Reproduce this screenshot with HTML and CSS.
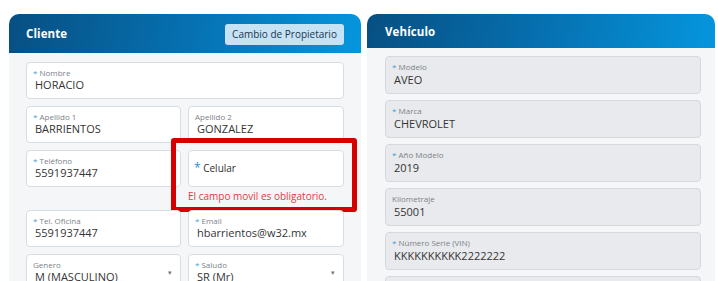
FILE: index.html
```html
<!DOCTYPE html>
<html lang="es">
<head>
<meta charset="utf-8">
<title>Cliente / Vehículo</title>
<link rel="stylesheet" href="styles.css">
</head>
<body>
<div class="page">
  <section class="card card-left">
    <header class="card-head head-left">
      <h2 class="card-title">Cliente</h2>
      <button class="btn-owner" type="button">Cambio de Propietario</button>
    </header>
    <div class="card-body">
      <div class="grid">
        <div class="field span2"><span class="lbl"><i class="req">*</i> Nombre</span><span class="val">HORACIO</span></div>
        <div class="field"><span class="lbl"><i class="req">*</i> Apellido 1</span><span class="val">BARRIENTOS</span></div>
        <div class="field"><span class="lbl">Apellido 2</span><span class="val">GONZALEZ</span></div>
        <div class="field"><span class="lbl"><i class="req">*</i> Teléfono</span><span class="val">5591937447</span></div>
        <div class="cell-err">
          <div class="field field-empty"><span class="ph"><i class="req req-big">*</i> Celular</span></div>
          <div class="err">El campo movil es obligatorio.</div>
          <div class="highlight"></div>
        </div>
        <div class="field"><span class="lbl"><i class="req">*</i> Tel. Oficina</span><span class="val">5591937447</span></div>
        <div class="field"><span class="lbl"><i class="req">*</i> Email</span><span class="val">hbarrientos@w32.mx</span></div>
        <div class="field select"><span class="lbl">Genero</span><span class="val">M (MASCULINO)</span><span class="caret">&#9662;</span></div>
        <div class="field select"><span class="lbl"><i class="req">*</i> Saludo</span><span class="val">SR (Mr)</span><span class="caret">&#9662;</span></div>
      </div>
    </div>
  </section>
  <section class="card card-right">
    <header class="card-head head-right">
      <h2 class="card-title">Vehículo</h2>
    </header>
    <div class="card-body body-right">
      <div class="stack">
        <div class="field dis"><span class="lbl"><i class="req">*</i> Modelo</span><span class="val">AVEO</span></div>
        <div class="field dis"><span class="lbl"><i class="req">*</i> Marca</span><span class="val">CHEVROLET</span></div>
        <div class="field dis"><span class="lbl"><i class="req">*</i> Año Modelo</span><span class="val">2019</span></div>
        <div class="field dis"><span class="lbl">Kilometraje</span><span class="val">55001</span></div>
        <div class="field dis"><span class="lbl"><i class="req">*</i> Número Serie (VIN)</span><span class="val">KKKKKKKKKK2222222</span></div>
        <div class="field dis"></div>
      </div>
    </div>
  </section>
</div>
</body>
</html>
```
FILE: styles.css
```css
* { box-sizing: border-box; }
html, body { margin: 0; padding: 0; background: #ffffff; overflow: hidden; }
body {
  font-family: "Open Sans", "Noto Sans", "Liberation Sans", sans-serif;
  color: #333;
}
.page {
  display: flex;
  align-items: flex-start;
  gap: 6px;
  padding: 14px 0 0 9px;
  height: 281px;
  overflow: hidden;
}
.card {
  background: #f5f6f8;
  border-radius: 10px 10px 0 0;
  display: flex;
  flex-direction: column;
  flex-shrink: 0;
  height: 300px;
}
.card-left { width: 352px; }
.card-right { width: 348px; }
.card-head {
  flex-shrink: 0;
  display: flex;
  align-items: center;
  justify-content: space-between;
  padding: 0 17px;
  border-radius: 10px 10px 0 0;
  background: linear-gradient(100deg, #074f82 0%, #0670b0 50%, #0596de 100%);
}
.head-left { height: 39px; }
.head-right { height: 34px; padding-left: 18px; }
.card-title {
  margin: 0;
  font-size: 11.5px;
  font-weight: 700;
  color: #ffffff;
  letter-spacing: 0.1px;
}
.btn-owner {
  font-family: inherit;
  font-size: 10px;
  color: #1c364f;
  background: #c6e3f5;
  border: 0;
  border-radius: 3px;
  height: 21px;
  padding: 0 5px;
  width: 119px;
  margin-top: 1px;
  white-space: nowrap;
}
.card-body { flex-shrink: 0; padding: 9px 17px 0; }
.body-right { padding: 8px 14px 0 18px; }
.grid {
  display: grid;
  grid-template-columns: 155px 156px;
  column-gap: 7px;
  row-gap: 7px;
}
.span2 { grid-column: 1 / 3; }
.field {
  position: relative;
  display: flex;
  flex-direction: column;
  flex-shrink: 0;
  height: 37px;
  background: #ffffff;
  border: 1px solid #d8dde4;
  border-radius: 4px;
  padding: 5px 8px 0 6px;
}
.lbl {
  font-size: 8px;
  line-height: 10px;
  color: #7d8288;
  white-space: nowrap;
}
.req {
  font-style: normal;
  color: #3a9fe0;
  font-size: 8px;
}
.val {
  font-size: 11px;
  line-height: 14px;
  color: #343434;
  padding-left: 2px;
  white-space: nowrap;
}
.select .caret {
  position: absolute;
  right: 8px;
  top: 13px;
  font-size: 7px;
  color: #777;
}
.cell-err { position: relative; display: flex; flex-direction: column; }
.field-empty { justify-content: center; padding: 0 8px 2px 5px; }
.ph { font-size: 10px; color: #2e2e2e; }
.req-big { font-size: 12px; color: #2b8fd6; }
.err {
  font-size: 10px;
  line-height: 14px;
  margin-top: 2px;
  color: #e23b3b;
  white-space: nowrap;
}
.highlight {
  position: absolute;
  left: -17px;
  top: -12px;
  width: 186px;
  height: 74px;
  border: 5px solid #d60000;
  border-radius: 3px;
  pointer-events: none;
}
.stack {
  display: flex;
  flex-direction: column;
  gap: 6px;
}
.field.dis {
  height: 38px;
  background: #e8eaed;
  border-color: #d5d9de;
}
.dis .val { line-height: 16px; }
```
